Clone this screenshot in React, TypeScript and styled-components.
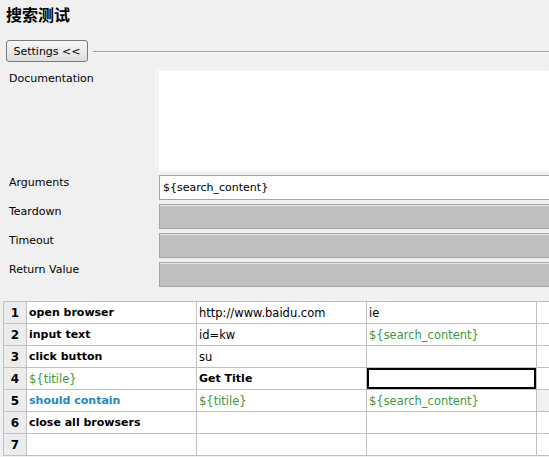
import React from 'react';
import styled, { createGlobalStyle, css } from 'styled-components';

const GlobalStyle = createGlobalStyle`
  html, body {
    margin: 0;
    padding: 0;
    background: #f0f0f0;
  }

  body {
    font-family: "DejaVu Sans", Verdana, sans-serif;
    font-size: 11px;
    color: #000;
    overflow: hidden;
  }
`;

const Page = styled.div`
  width: 549px;
  height: 457px;
  overflow: hidden;
  background: #f0f0f0;
`;

const Title = styled.h1`
  margin: 0;
  padding: 4px 6px 0;
  height: 20px;
  line-height: 20px;
  font-family: "Noto Sans CJK SC", "DejaVu Sans", sans-serif;
  font-size: 16px;
  font-weight: 700;
`;

const SettingsBar = styled.div`
  display: flex;
  align-items: center;
  gap: 5px;
  margin-top: 16px;
  padding-left: 6px;
`;

const SettingsButton = styled.button`
  width: 82px;
  height: 22px;
  padding: 0;
  border: 1px solid #7a7a7a;
  border-radius: 3px;
  background: linear-gradient(#f7f7f7, #dedede);
  font-family: inherit;
  font-size: 11px;
  color: #000;
`;

const Rule = styled.div`
  flex: 1;
  height: 1px;
  margin-top: 1px;
  background: #a0a0a0;
  border-bottom: 1px solid #fafafa;
`;

const Form = styled.div`
  display: grid;
  grid-template-columns: 159px 1fr;
  row-gap: 4px;
  margin-top: 9px;
`;

const Label = styled.div`
  padding: 1px 0 0 9px;
  line-height: 13px;
`;

const DocBox = styled.div`
  height: 100px;
  background: #fff;
  box-shadow: -4px -4px 0 #f4f4f4;
`;

const Field = styled.div<{ $disabled?: boolean }>`
  height: 23px;
  border: 1px solid #a5a5a5;
  border-right: none;
  padding-left: 3px;
  display: flex;
  align-items: center;
  background: #fff;
  ${({ $disabled }) =>
    $disabled &&
    css`
      background: #c0c0c0;
      box-shadow: inset 0 1px 0 #e8e8e8;
    `}
`;

const Table = styled.div`
  margin: 14px 0 0 3px;
  border-top: 1px solid #c0c0c0;
  border-left: 1px solid #c0c0c0;
`;

const Row = styled.div`
  display: grid;
  grid-template-columns: 23px 170px 170px 170px 100px;
  height: 22px;
`;

const RowNumber = styled.div`
  background: #ececec;
  border-right: 1px solid #c0c0c0;
  border-bottom: 1px solid #c0c0c0;
  display: flex;
  align-items: center;
  justify-content: center;
  font-size: 12px;
  font-weight: 700;
`;

type Tone = 'plain' | 'keyword' | 'var' | 'link';

const toneStyles: Record<Tone, ReturnType<typeof css>> = {
  plain: css`
    color: #000;
    font-size: 11.5px;
  `,
  keyword: css`
    color: #000;
    font-weight: 700;
  `,
  var: css`
    color: #3a9a3a;
    font-size: 11.5px;
  `,
  link: css`
    color: #1d88c6;
    font-weight: 700;
  `,
};

const Cell = styled.div<{ $tone?: Tone; $selected?: boolean; $shaded?: boolean }>`
  background: ${({ $shaded }) => ($shaded ? '#f1f1f1' : '#fff')};
  border-right: 1px solid #c0c0c0;
  border-bottom: 1px solid #c0c0c0;
  padding-left: 2px;
  display: flex;
  align-items: center;
  white-space: nowrap;
  overflow: hidden;
  ${({ $tone = 'plain' }) => toneStyles[$tone]}
  ${({ $selected }) =>
    $selected &&
    css`
      box-shadow: inset 0 0 0 2px #000;
    `}
`;

type CellData = { text?: string; tone?: Tone; selected?: boolean; shaded?: boolean };

const rows: CellData[][] = [
  [{ text: 'open browser', tone: 'keyword' }, { text: 'http://www.baidu.com' }, { text: 'ie' }, {}],
  [{ text: 'input text', tone: 'keyword' }, { text: 'id=kw' }, { text: '${search_content}', tone: 'var' }, {}],
  [{ text: 'click button', tone: 'keyword' }, { text: 'su' }, {}, {}],
  [{ text: '${titile}', tone: 'var' }, { text: 'Get Title', tone: 'keyword' }, { selected: true }, {}],
  [
    { text: 'should contain', tone: 'link' },
    { text: '${titile}', tone: 'var' },
    { text: '${search_content}', tone: 'var' },
    { shaded: true },
  ],
  [{ text: 'close all browsers', tone: 'keyword' }, {}, {}, {}],
  [{}, {}, {}, {}],
];

const App = () => (
  <Page>
    <GlobalStyle />
    <Title>搜索测试</Title>

    <SettingsBar>
      <SettingsButton>Settings &lt;&lt;</SettingsButton>
      <Rule />
    </SettingsBar>

    <Form>
      <Label>Documentation</Label>
      <DocBox />

      <Label>Arguments</Label>
      <Field>{'${search_content}'}</Field>

      <Label>Teardown</Label>
      <Field $disabled />

      <Label>Timeout</Label>
      <Field $disabled />

      <Label>Return Value</Label>
      <Field $disabled />
    </Form>

    <Table>
      {rows.map((cells, i) => (
        <Row key={i}>
          <RowNumber>{i + 1}</RowNumber>
          {cells.map((c, j) => (
            <Cell key={j} $tone={c.tone} $selected={c.selected} $shaded={c.shaded}>
              {c.text}
            </Cell>
          ))}
        </Row>
      ))}
    </Table>
  </Page>
);

export default App;
